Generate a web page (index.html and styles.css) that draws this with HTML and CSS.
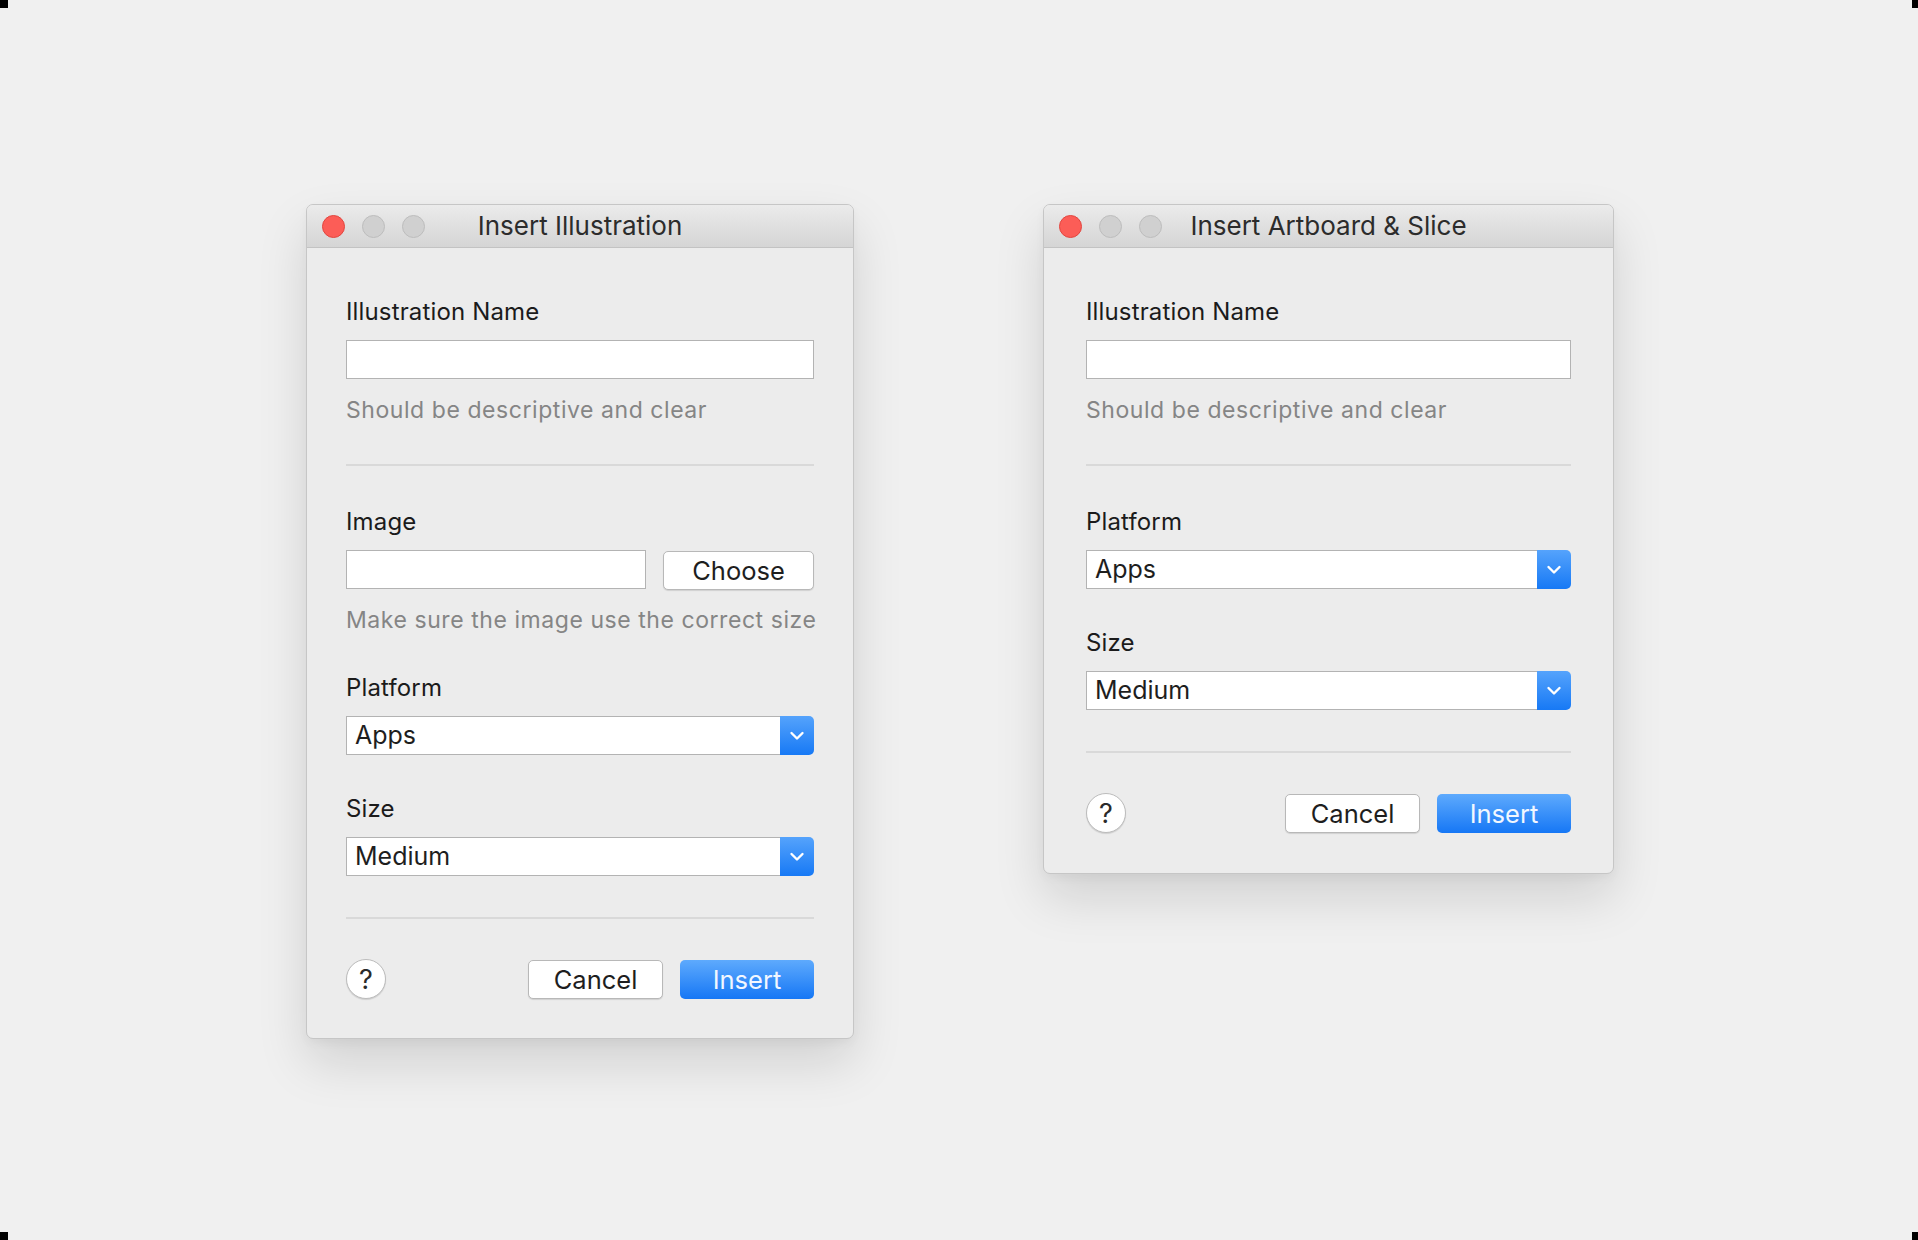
FILE: index.html
```html
<!DOCTYPE html>
<html lang="en">
<head>
<meta charset="utf-8">
<title>Insert dialogs</title>
<link rel="stylesheet" href="styles.css">
</head>
<body>
<div class="corner corner-tl"></div>
<div class="corner corner-tr"></div>
<div class="corner corner-bl"></div>
<div class="corner corner-br"></div>
<main class="stage">
  <section class="window win-left">
    <header class="titlebar">
      <div class="lights"><span class="light light-close"></span><span class="light"></span><span class="light"></span></div>
      <h1 class="title">Insert Illustration</h1>
      <div></div>
    </header>
    <div class="content">
      <div class="field">
        <div class="label">Illustration Name</div>
        <div class="input"></div>
        <div class="hint">Should be descriptive and clear</div>
      </div>
      <div class="sep"></div>
      <div class="field">
        <div class="label">Image</div>
        <div class="file-row">
          <div class="input input-file"></div>
          <div class="btn btn-choose">Choose</div>
        </div>
        <div class="hint">Make sure the image use the correct size</div>
      </div>
      <div class="field field-gap">
        <div class="label">Platform</div>
        <div class="select"><span class="select-value">Apps</span><span class="select-arrow"><svg width="16" height="10" viewBox="0 0 16 10"><path d="M2.5 2 L8 7.5 L13.5 2" fill="none" stroke="#fff" stroke-width="2.4" stroke-linecap="round" stroke-linejoin="round"/></svg></span></div>
      </div>
      <div class="field field-gap">
        <div class="label">Size</div>
        <div class="select"><span class="select-value">Medium</span><span class="select-arrow"><svg width="16" height="10" viewBox="0 0 16 10"><path d="M2.5 2 L8 7.5 L13.5 2" fill="none" stroke="#fff" stroke-width="2.4" stroke-linecap="round" stroke-linejoin="round"/></svg></span></div>
      </div>
      <div class="sep sep-bottom"></div>
      <div class="actions">
        <div class="help">?</div>
        <div class="btn btn-cancel">Cancel</div>
        <div class="btn btn-primary">Insert</div>
      </div>
    </div>
  </section>

  <section class="window win-right">
    <header class="titlebar">
      <div class="lights"><span class="light light-close"></span><span class="light"></span><span class="light"></span></div>
      <h1 class="title">Insert Artboard &amp; Slice</h1>
      <div></div>
    </header>
    <div class="content">
      <div class="field">
        <div class="label">Illustration Name</div>
        <div class="input"></div>
        <div class="hint">Should be descriptive and clear</div>
      </div>
      <div class="sep"></div>
      <div class="field">
        <div class="label">Platform</div>
        <div class="select"><span class="select-value">Apps</span><span class="select-arrow"><svg width="16" height="10" viewBox="0 0 16 10"><path d="M2.5 2 L8 7.5 L13.5 2" fill="none" stroke="#fff" stroke-width="2.4" stroke-linecap="round" stroke-linejoin="round"/></svg></span></div>
      </div>
      <div class="field field-gap">
        <div class="label">Size</div>
        <div class="select"><span class="select-value">Medium</span><span class="select-arrow"><svg width="16" height="10" viewBox="0 0 16 10"><path d="M2.5 2 L8 7.5 L13.5 2" fill="none" stroke="#fff" stroke-width="2.4" stroke-linecap="round" stroke-linejoin="round"/></svg></span></div>
      </div>
      <div class="sep sep-bottom"></div>
      <div class="actions">
        <div class="help">?</div>
        <div class="btn btn-cancel">Cancel</div>
        <div class="btn btn-primary">Insert</div>
      </div>
    </div>
  </section>
</main>
</body>
</html>
```

FILE: styles.css
```css
* { box-sizing: border-box; }

html, body {
  margin: 0;
  padding: 0;
}

body {
  background: #f0f0f0;
  font-family: Inter, "Noto Sans", "Liberation Sans", sans-serif;
  color: #1e1e1e;
  width: 1918px;
  height: 1240px;
  overflow: hidden;
}

.corner {
  position: fixed;
  width: 8px;
  height: 8px;
  background: #000;
}
.corner-tl { left: 0; top: 0; }
.corner-tr { right: 0; top: 0; width: 6px; }
.corner-bl { left: 0; bottom: 0; }
.corner-br { right: 0; bottom: 0; width: 6px; }

.stage {
  display: flex;
  align-items: flex-start;
  gap: 189px;
  padding: 204px 0 0 306px;
}

.window {
  background: #ececec;
  border: 1px solid #c6c6c6;
  border-radius: 7px;
  box-shadow: 0 24px 50px rgba(0, 0, 0, 0.13), 0 4px 10px rgba(0, 0, 0, 0.04);
  overflow: hidden;
}
.win-left { width: 548px; }
.win-right { width: 571px; }

.titlebar {
  height: 43px;
  display: grid;
  grid-template-columns: 1fr auto 1fr;
  align-items: center;
  background: linear-gradient(#ebebeb, #d5d5d5);
  border-bottom: 1px solid #c3c3c3;
  padding: 0 15px;
}

.lights {
  display: flex;
  gap: 17px;
  align-items: center;
}
.light {
  width: 23px;
  height: 23px;
  border-radius: 50%;
  background: #d0d0d0;
  border: 1px solid #bdbdbd;
}
.light-close {
  background: #fc5d57;
  border-color: #e2463f;
}

.title {
  margin: 0;
  font-size: 26px;
  font-weight: 400;
  color: #2c2c2c;
  line-height: 30px;
  white-space: nowrap;
}

.content {
  padding: 50px 39px 39px;
}
.win-right .content {
  padding: 50px 42px 40px;
}

.label {
  font-size: 24px;
  letter-spacing: 0.15px;
  line-height: 28px;
  color: #1b1b1b;
  margin-bottom: 14px;
}

.input {
  height: 39px;
  background: #fff;
  border: 1px solid #b3b3b3;
}

.hint {
  margin-top: 17px;
  font-size: 23px;
  line-height: 28px;
  color: #858585;
  letter-spacing: 0.56px;
  white-space: nowrap;
}

.sep {
  height: 2px;
  background: #d9d9d9;
  margin: 40px 0 42px;
}
.sep.sep-bottom {
  margin: 41px 0 40px;
}

.field-gap {
  margin-top: 40px;
}

.file-row {
  display: flex;
  gap: 17px;
  align-items: flex-start;
  height: 39px;
}
.input-file {
  width: 300px;
}

.btn {
  height: 39px;
  display: flex;
  align-items: center;
  justify-content: center;
  font-size: 25.5px;
  border-radius: 5px;
}
.btn-choose {
  flex: 1;
  background: #fff;
  border: 1px solid #b8b8b8;
  box-shadow: 0 1px 1px rgba(0, 0, 0, 0.12);
  color: #1e1e1e;
  margin-top: 1px;
}

.select {
  display: flex;
  height: 39px;
}
.select-value {
  flex: 1;
  background: #fff;
  border: 1px solid #b3b3b3;
  border-right: none;
  font-size: 25px;
  line-height: 37px;
  padding-left: 8px;
  color: #1e1e1e;
}
.select-arrow {
  width: 34px;
  display: flex;
  align-items: center;
  justify-content: center;
  background: linear-gradient(#55a3fc, #1779f5);
  border-radius: 0 5px 5px 0;
}

.actions {
  display: flex;
  align-items: center;
}
.help {
  width: 40px;
  height: 40px;
  border-radius: 50%;
  background: #fff;
  border: 1px solid #bcbcbc;
  box-shadow: 0 1px 1px rgba(0, 0, 0, 0.12);
  display: flex;
  align-items: center;
  justify-content: center;
  font-size: 27px;
  color: #2a2a2a;
  margin-right: auto;
}
.btn-cancel {
  width: 135px;
  background: #fff;
  border: 1px solid #b8b8b8;
  box-shadow: 0 1px 1px rgba(0, 0, 0, 0.12);
  color: #1e1e1e;
}
.btn-primary {
  width: 134px;
  margin-left: 17px;
  background: linear-gradient(#5eaafd, #1677f5);
  color: #f2f7ff;
}
```
